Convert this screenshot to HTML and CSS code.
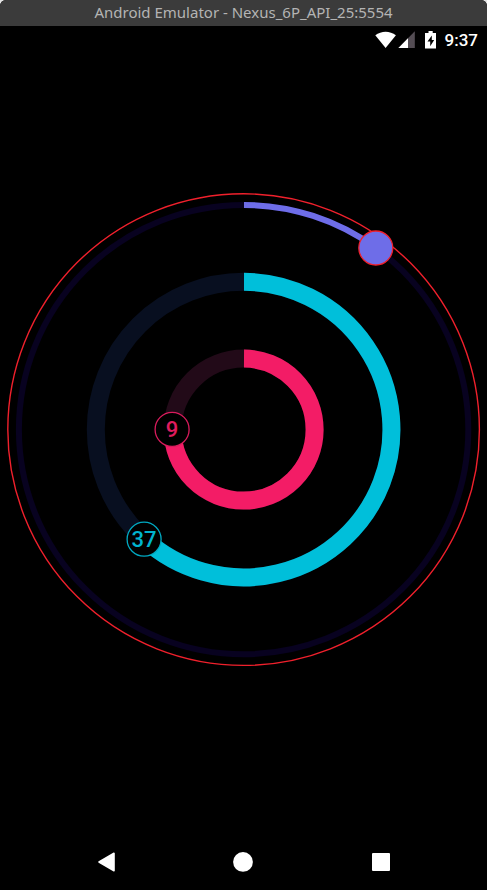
FILE: index.html
```
<!DOCTYPE html>
<html lang="en">
<head>
<meta charset="utf-8">
<title>Android Emulator</title>
<link rel="stylesheet" href="styles.css">
</head>
<body>
<div class="window">
  <header class="titlebar">Android Emulator - Nexus_6P_API_25:5554</header>
  <div class="statusbar">
    <svg class="signals" width="41" height="18" viewBox="0 0 41 18" aria-hidden="true">
      <path d="M0.3 4.3C6.2-.5 15-.5 20.9 4.3L10.6 17Z" fill="#fff"/>
      <path d="M39.8.3V17H23.4Z" fill="#544d54"/>
      <path d="M33 7.2V17H23.4Z" fill="#fff"/>
    </svg>
    <svg class="battery" width="12" height="18" viewBox="0 0 12 18" aria-hidden="true">
      <path d="M3.5 0h4.2v2H11v15.6H0V2h3.5z" fill="#fff"/>
      <path d="M6.8 4.6 2.5 10.6h2.7v4.6l4-6.2H6.8z" fill="#000"/>
    </svg>
    <time class="clock">9:37</time>
  </div>
  <main class="face">
    <svg class="dial" viewBox="0 0 487 474" role="img" aria-label="9 hours, 37 minutes">
      <g fill="none">
        <circle cx="243.6" cy="236.6" r="235.8" stroke="#f0202c" stroke-width="1.4"/>
        <circle cx="243.6" cy="236.6" r="224.7" stroke="#080220" stroke-width="6"/>
        <path d="M244 11.9A224.7 224.7 0 0 1 375.7 54.8" stroke="#6e6de8" stroke-width="6"/>
        <circle cx="243.6" cy="236.6" r="147.8" stroke="#080f20" stroke-width="18"/>
        <path d="M244 88.8A147.8 147.8 0 1 1 144.7 346.4" stroke="#00bfda" stroke-width="18"/>
        <circle cx="243.6" cy="236.6" r="71" stroke="#220a18" stroke-width="18"/>
        <path d="M244 165.6A71 71 0 1 1 172.6 236.6" stroke="#f31c66" stroke-width="18"/>
      </g>
      <circle cx="375.8" cy="55" r="17" fill="#6e6de8" stroke="#f0202c" stroke-width="1.3"/>
      <circle cx="144.1" cy="346.2" r="17" fill="#000" stroke="#00a9c2" stroke-width="1.3"/>
      <circle cx="172.1" cy="236.4" r="17" fill="#000" stroke="#d91b5c" stroke-width="1.3"/>
      <text class="value minutes" x="144" y="354">37</text>
      <text class="value hours" x="172" y="244">9</text>
    </svg>
  </main>
  <nav class="navbar">
    <button class="key" type="button" aria-label="Back">
      <svg width="20" height="20" viewBox="0 0 20 20"><path d="M3 10 18 1.3V18.7Z" fill="#fff" stroke="#fff" stroke-width="1.6" stroke-linejoin="round"/></svg>
    </button>
    <button class="key" type="button" aria-label="Home">
      <svg width="20" height="20" viewBox="0 0 20 20"><circle cx="10" cy="9.9" r="9.9" fill="#fff"/></svg>
    </button>
    <button class="key" type="button" aria-label="Overview">
      <svg width="20" height="20" viewBox="0 0 20 20"><rect x="1" y="1" width="18" height="18" rx="1" fill="#fff"/></svg>
    </button>
  </nav>
</div>
</body>
</html>
```
FILE: styles.css
```
* {
  box-sizing: border-box;
}

body {
  margin: 0;
  background: #e4e4e4;
}

.window {
  display: flex;
  flex-direction: column;
  min-height: 100vh;
  background: #000;
  border-radius: 6px 6px 0 0;
  overflow: hidden;
}

.titlebar {
  height: 26px;
  background: #3b3b3b;
  color: #b4b4b4;
  font: 15px/24px "Noto Sans", sans-serif;
  text-align: center;
}

.statusbar {
  display: flex;
  justify-content: flex-end;
  align-items: center;
  height: 28px;
  padding-right: 9px;
}

.battery {
  margin: 0 8px 0 9px;
}

.clock {
  color: #fff;
  font: 500 17px/28px Roboto, sans-serif;
}

.face {
  flex: 1;
  display: flex;
  align-items: center;
  padding-bottom: 28px;
}

.dial {
  display: block;
  width: 100%;
}

.value {
  font: 500 22px Roboto, sans-serif;
  text-anchor: middle;
}

.minutes {
  fill: #00b4cf;
}

.hours {
  fill: #e01c5f;
}

.navbar {
  display: grid;
  grid-template-columns: repeat(3, 1fr);
  height: 57px;
  padding: 0 37px;
}

.key {
  display: flex;
  justify-content: center;
  align-items: center;
  padding: 0;
  border: 0;
  background: none;
}
```
